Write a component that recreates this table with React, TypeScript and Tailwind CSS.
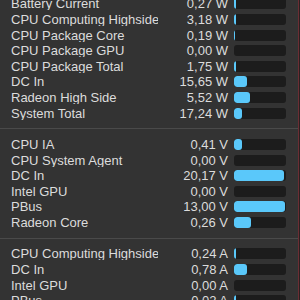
type Row = { label: string; value: string; fill: number };

const sections: Row[][] = [
  [
    { label: 'Battery Current', value: '0,27 W', fill: 1.5 },
    { label: 'CPU Computing Highside', value: '3,18 W', fill: 2 },
    { label: 'CPU Package Core', value: '0,19 W', fill: 1 },
    { label: 'CPU Package GPU', value: '0,00 W', fill: 0 },
    { label: 'CPU Package Total', value: '1,75 W', fill: 1.5 },
    { label: 'DC In', value: '15,65 W', fill: 13 },
    { label: 'Radeon High Side', value: '5,52 W', fill: 16 },
    { label: 'System Total', value: '17,24 W', fill: 8 },
  ],
  [
    { label: 'CPU IA', value: '0,41 V', fill: 8 },
    { label: 'CPU System Agent', value: '0,00 V', fill: 0 },
    { label: 'DC In', value: '20,17 V', fill: 50 },
    { label: 'Intel GPU', value: '0,00 V', fill: 0 },
    { label: 'PBus', value: '13,00 V', fill: 51 },
    { label: 'Radeon Core', value: '0,26 V', fill: 17 },
  ],
  [
    { label: 'CPU Computing Highside', value: '0,24 A', fill: 1.5 },
    { label: 'DC In', value: '0,78 A', fill: 13 },
    { label: 'Intel GPU', value: '0,00 A', fill: 0 },
    { label: 'PBus', value: '0,02 A', fill: 1.5 },
  ],
];

const SensorRow = ({ row }: { row: Row }) => (
  <div className="h-[15.64px] flex items-center">
    <span className="pl-[11px] flex-1 whitespace-nowrap overflow-hidden">{row.label}</span>
    <span className="w-[70px] text-right whitespace-nowrap">{row.value}</span>
    <div className="ml-[6px] w-[52px] h-[11px] rounded-[3px] bg-[#1c1c1c] overflow-hidden shrink-0">
      {row.fill > 0 && (
        <div className="h-full rounded-[3px] bg-[#5ac8fa]" style={{ width: `${row.fill}px` }} />
      )}
    </div>
    <div className="w-[12px] shrink-0" />
  </div>
);

const App = () => {
  return (
    <div className="w-[300px] h-[300px] overflow-hidden flex bg-[#333333]">
      <div
        className="w-[298px] text-[13px] text-[#dcdcdc] leading-none"
        style={{ fontFamily: '"Liberation Sans", Arial, sans-serif' }}
      >
        <div className="-mt-[4px]">
          {sections.map((rows, i) => (
            <div key={i}>
              {i > 0 && (
                <div className="h-[15.64px] flex items-center">
                  <div className="w-full h-px bg-[#4a4a4a]" />
                </div>
              )}
              {rows.map((row, j) => (
                <SensorRow key={j} row={row} />
              ))}
            </div>
          ))}
        </div>
      </div>
      <div className="w-px bg-[#6a2e34]" />
      <div className="w-px bg-[#2a2021]" />
    </div>
  );
};

export default App;
